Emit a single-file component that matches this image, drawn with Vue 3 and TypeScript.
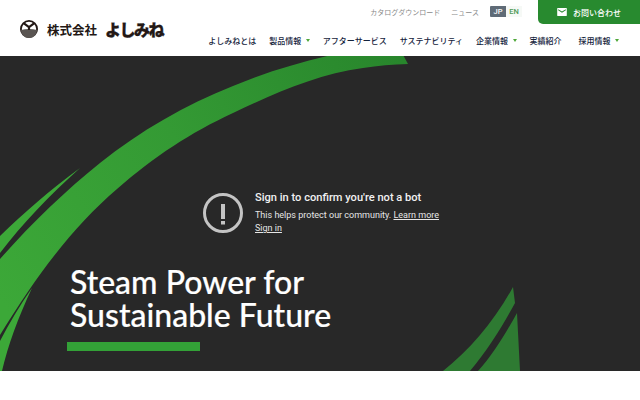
<script setup lang="ts">
interface NavItem {
  label: string;
  caret?: boolean;
}

const navItems: NavItem[] = [
  { label: 'よしみねとは' },
  { label: '製品情報', caret: true },
  { label: 'アフターサービス' },
  { label: 'サステナビリティ' },
  { label: '企業情報', caret: true },
  { label: '実績紹介' },
  { label: '採用情報', caret: true },
];
</script>

<template>
  <div class="page">
    <header class="site-header">
      <a class="logo">
        <svg class="logo-mark" width="18" height="18" viewBox="0 0 20 20">
          <circle cx="10" cy="10" r="9" fill="#fff" stroke="#231815" stroke-width="2" />
          <path d="M1 11 Q10 8.8 19 11 A9 9 0 0 1 1 11Z" fill="#5a5552" />
          <path d="M4 3.6 L10 8 L16 3.6 M10 8 V11" fill="none" stroke="#231815" stroke-width="2.4" />
        </svg>
        <span class="logo-corp">株式会社</span>
        <span class="logo-name">よしみね</span>
      </a>
      <div class="header-right">
        <div class="top-row">
          <a class="top-link">カタログダウンロード</a>
          <a class="top-link">ニュース</a>
          <div class="lang">
            <span class="lang-jp">JP</span>
            <span class="lang-en">EN</span>
          </div>
          <a class="contact">
            <svg width="10" height="8" viewBox="0 0 12 10">
              <path d="M0.5 0H11.5A0.5 0.5 0 0 1 12 0.5V9.5A0.5 0.5 0 0 1 11.5 10H0.5A0.5 0.5 0 0 1 0 9.5V0.5A0.5 0.5 0 0 1 0.5 0ZM1.2 1.6V2.8L6 5.8L10.8 2.8V1.6L6 4.5Z" fill="#fff" fill-rule="evenodd" />
            </svg>
            お問い合わせ
          </a>
        </div>
        <nav class="main-nav">
          <a v-for="item in navItems" :key="item.label" class="nav-item">
            {{ item.label }}
            <i v-if="item.caret" class="caret"></i>
          </a>
        </nav>
      </div>
    </header>

    <section class="hero">
      <svg class="swoosh" width="640" height="315" viewBox="0 56 640 315">
        <defs>
          <linearGradient id="bandFill" gradientUnits="userSpaceOnUse" x1="0" y1="300" x2="400" y2="60">
            <stop offset="0" stop-color="#3ca838" />
            <stop offset="0.5" stop-color="#349a34" />
            <stop offset="1" stop-color="#28862c" />
          </linearGradient>
        </defs>
        <!-- main arc -->
        <path d="M0 259 C30 225 65 191 100 163 C140 131 185 105 233 86 C268 71 305 61 340 53 L402 53 L408 64 C392 64.5 378 65.5 363 68 C318 74 275 93 233 113 C190 133 155 156 117 189 C75 225 40 270 0 335Z" fill="url(#bandFill)" />
        <!-- thin slivers either side of it -->
        <path d="M0 236 C25 212 50 190 80 168 C50 195 22 224 0 253Z" fill="#3ca838" />
        <path d="M32 288 C20 305 10 322 0 341 L0 371 L2 371 C8 345 18 318 32 288Z" fill="#3ca838" />
        <!-- lower right -->
        <path d="M443 371 C470 350 495 320 513 287 L515 303 C503 325 488 350 470 371Z" fill="#2e7a32" />
        <path d="M478 371 C493 355 507 331 517 313 L520 371Z" fill="#2e7a32" />
      </svg>

      <div class="notice">
        <svg class="notice-icon" width="40" height="40" viewBox="0 0 40 40">
          <circle cx="20" cy="20" r="18.5" fill="none" stroke="#c4c4c4" stroke-width="3" />
          <rect x="18" y="11" width="4" height="15" fill="#c4c4c4" />
          <rect x="18" y="28" width="4" height="3.5" fill="#c4c4c4" />
        </svg>
        <div class="notice-body">
          <div class="notice-title">Sign in to confirm you're not a bot</div>
          <div class="notice-text">This helps protect our community. <a>Learn more</a></div>
          <a class="notice-link">Sign in</a>
        </div>
      </div>

      <div class="copy">
        <h1>Steam Power for<br />Sustainable Future</h1>
        <div class="copy-bar"></div>
      </div>
    </section>
  </div>
</template>

<style scoped>
.page {
  width: 640px;
  height: 400px;
  background: #fff;
  overflow: hidden;
  font-family: Roboto, "Noto Sans CJK JP", sans-serif;
}

.site-header {
  height: 56px;
  display: flex;
  justify-content: space-between;
  padding-left: 20px;
}

.logo {
  display: flex;
  align-items: center;
  height: 58px;
  color: #231815;
}

.logo-corp {
  margin-left: 9px;
  font: 700 12.5px "Noto Sans CJK JP", sans-serif;
}

.logo-name {
  margin-left: 8px;
  font: 900 16px "Noto Sans CJK JP", sans-serif;
  letter-spacing: -1.5px;
  -webkit-text-stroke: 0.3px #231815;
}

.header-right {
  display: flex;
  flex-direction: column;
  align-items: flex-end;
}

.top-row {
  display: flex;
  align-items: flex-start;
  height: 24px;
}

.top-link {
  margin-right: 11px;
  line-height: 24px;
  font-family: "Noto Sans CJK JP", sans-serif;
  font-size: 7px;
  color: #8a8a8a;
}

.lang {
  display: flex;
  margin-top: 6px;
  margin-right: 16px;
  font: 500 7.5px Roboto, sans-serif;
}

.lang-jp,
.lang-en {
  width: 16px;
  height: 11px;
  display: flex;
  align-items: center;
  justify-content: center;
}

.lang-jp {
  background: #5f6b77;
  color: #fff;
  border-radius: 1px 0 0 1px;
}

.lang-en {
  color: #4f9a55;
  background: #f6f9f6;
}

.contact {
  width: 102px;
  height: 24px;
  display: flex;
  align-items: center;
  justify-content: center;
  gap: 6px;
  background: #288a2f;
  border-bottom-left-radius: 5px;
  color: #fff;
  font: 500 8px "Noto Sans CJK JP", sans-serif;
}

.main-nav {
  display: flex;
  align-items: center;
  gap: 13px;
  height: 32px;
  padding-right: 21px;
}

.nav-item {
  display: flex;
  align-items: center;
  font: 500 8px "Noto Sans CJK JP", sans-serif;
  color: #14233c;
  white-space: nowrap;
}

.nav-item:last-child {
  margin-left: 4px;
}

.caret {
  width: 0;
  height: 0;
  margin-left: 4.5px;
  border-left: 2.5px solid transparent;
  border-right: 2.5px solid transparent;
  border-top: 3px solid #4fa83a;
}

.hero {
  position: relative;
  height: 315px;
  background: #282828;
  overflow: hidden;
}

.swoosh {
  position: absolute;
  left: 0;
  top: 0;
}

.notice {
  position: absolute;
  left: 203px;
  top: 137px;
  display: flex;
  align-items: flex-start;
  gap: 12px;
  color: #f1f1f1;
}

.notice-body {
  margin-top: -2px;
}

.notice-title {
  font-size: 11.1px;
  font-weight: 500;
  line-height: 14px;
  margin-bottom: 4px;
}

.notice-text,
.notice-link {
  font-size: 9px;
  line-height: 13px;
  display: block;
  color: #e6e6e6;
}

.notice-text a,
.notice-link {
  text-decoration: underline;
}

.copy {
  position: absolute;
  left: 67px;
  top: 209px;
}

.copy h1 {
  margin: 0 0 0 3px;
  font: 500 32px/33px Lato, sans-serif;
  color: #fff;
  -webkit-text-stroke: 0.2px #fff;
}

.copy-bar {
  width: 133px;
  height: 9px;
  margin-top: 11px;
  background: #33a137;
}
</style>
